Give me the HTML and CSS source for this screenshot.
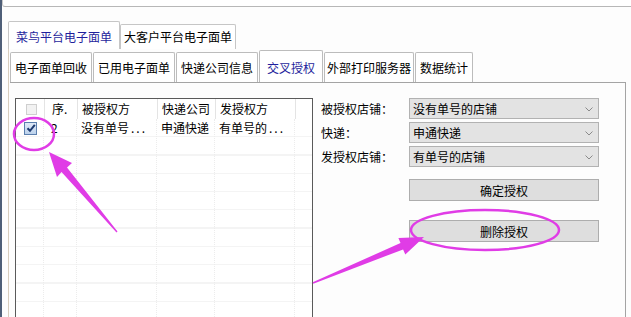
FILE: index.html
```html
<!DOCTYPE html>
<html lang="zh-CN">
<head>
  <meta charset="UTF-8">
  <title>交叉授权</title>
  <link rel="stylesheet" href="styles.css">
</head>
<body>
  <div class="window">
    <div class="top-panel"></div>

    <!-- Outer tabs -->
    <div class="outer">
      <div class="outer-tabs">
        <div class="outer-tab active">菜鸟平台电子面单</div>
        <div class="outer-tab">大客户平台电子面单</div>
      </div>

      <div class="outer-page">
        <!-- Inner tabs -->
        <div class="inner-tabs">
          <div class="inner-tab">电子面单回收</div>
          <div class="inner-tab">已用电子面单</div>
          <div class="inner-tab">快递公司信息</div>
          <div class="inner-tab active">交叉授权</div>
          <div class="inner-tab narrow">外部打印服务器</div>
          <div class="inner-tab">数据统计</div>
        </div>

        <div class="inner-page">
          <!-- Authorization list -->
          <div class="list">
            <div class="list-head">
              <div class="cell col-check"><span class="checkbox disabled"></span></div>
              <div class="cell col-seq sep">序.</div>
              <div class="cell col-name sep">被授权方</div>
              <div class="cell col-company sep">快递公司</div>
              <div class="cell col-issuer sep">发授权方</div>
              <div class="cell col-rest"></div>
            </div>
            <div class="list-body">
              <div class="grid-cols">
                <div class="col-check"></div>
                <div class="col-seq"></div>
                <div class="col-name"></div>
                <div class="col-company"></div>
                <div class="col-issuer"></div>
              </div>
              <div class="list-row">
                <div class="cell col-check">
                  <span class="checkbox checked">
                    <svg viewBox="0 0 10 10" width="10" height="10"><path d="M1.5 5.2 L4 7.8 L8.8 1.8" fill="none" stroke="#1d3a70" stroke-width="2"/></svg>
                  </span>
                </div>
                <div class="cell col-seq">2</div>
                <div class="cell col-name">没有单号<span class="dots">...</span></div>
                <div class="cell col-company">申通快递</div>
                <div class="cell col-issuer">有单号的<span class="dots">...</span></div>
              </div>
            </div>
          </div>

          <!-- Authorization form -->
          <div class="form">
            <label class="form-label">被授权店铺：</label>
            <div class="combo">没有单号的店铺<svg class="chevron" viewBox="0 0 8 5" width="8" height="5"><path d="M0.5 0.5 L4 4 L7.5 0.5" fill="none" stroke="#8a8a8a"/></svg></div>

            <label class="form-label">快递：</label>
            <div class="combo">申通快递<svg class="chevron" viewBox="0 0 8 5" width="8" height="5"><path d="M0.5 0.5 L4 4 L7.5 0.5" fill="none" stroke="#8a8a8a"/></svg></div>

            <label class="form-label">发授权店铺：</label>
            <div class="combo">有单号的店铺<svg class="chevron" viewBox="0 0 8 5" width="8" height="5"><path d="M0.5 0.5 L4 4 L7.5 0.5" fill="none" stroke="#8a8a8a"/></svg></div>

            <button class="btn btn-confirm">确定授权</button>
            <button class="btn btn-delete">删除授权</button>
          </div>
        </div>
      </div>
    </div>
  </div>

  <!-- Hand-drawn annotations on top of the screenshot -->
  <svg class="annotations" viewBox="0 0 631 317" width="631" height="317">
    <ellipse cx="34" cy="134" rx="20" ry="16" fill="none" stroke="#e03ce6" stroke-width="2.5"/>
    <polygon fill="#e03ce6" points="49,152 72,163 67,167.5 117.5,231.6 116.5,232.4 61.5,172 57,177"/>
    <ellipse cx="485" cy="230" rx="74" ry="20" fill="none" stroke="#e03ce6" stroke-width="2.5"/>
    <polygon fill="#e03ce6" points="424,237 405.3,254.5 403.1,249.4 313.3,283.7 312.7,282.3 400.5,243 398.4,237.9"/>
  </svg>
</body>
</html>
```

FILE: styles.css
```css
/* General */
body {
  margin: 0;
  width: 631px;
  height: 317px;
  overflow: hidden;
  position: relative;
  background-color: #ffffff;
  font-family: "Noto Sans CJK SC", "Liberation Sans", sans-serif;
  font-size: 12px;
  color: #000000;
}

.window {
  height: 317px;
  border-left: 2px solid #4f5f78; /* dark frame edge */
  box-sizing: border-box;
  background-color: #fdfdfd;
}

.top-panel {
  height: 6px;
  border-left: 1px solid #c9c9c9;
  border-bottom: 1px solid #b7b7b7;
  border-bottom-left-radius: 3px;
  background-color: #ffffff;
}

/* Outer tabs */
.outer {
  margin: 14px 0 0 6px;
}

.outer-tabs {
  display: flex;
  align-items: flex-end;
  height: 28px;
}

.outer-tab {
  height: 24px;
  line-height: 24px;
  padding: 0 3px;
  border: 1px solid #c6c6c6;
  border-bottom: none;
  border-radius: 2px 2px 0 0;
  background-color: #ffffff;
  white-space: nowrap;
}

.outer-tab.active {
  height: 27px;
  line-height: 29px;
  padding: 0 7px;
  color: #1f1f9c;
}

.outer-page {
  border-left: 1px solid #d8cebe;
  padding: 1px 0 0 1px;
}

/* Inner tabs */
.inner-tabs {
  display: flex;
  align-items: flex-end;
  height: 32px;
}

.inner-tab {
  height: 29px;
  line-height: 30px;
  padding: 0 4px;
  margin-right: 1px;
  border: 1px solid #bcbcbc;
  border-bottom: none;
  border-radius: 2px 2px 0 0;
  background-color: #ffffff;
  white-space: nowrap;
}

.inner-tab.narrow {
  padding: 0 2px;
}

.inner-tab.active {
  height: 31px;
  line-height: 34px;
  padding: 0 7px;
  color: #1f1f9c;
}

.inner-page {
  display: flex;
  width: 616px;
  height: 235px;
  box-sizing: border-box;
  border-top: 1px solid #a4a4a4;
  border-right: 1px solid #a4a4a4;
  padding: 15px 0 0 5px;
}

/* List view */
.list {
  width: 298px;
  box-sizing: border-box;
  border: 1px solid #5a5a5a;
  border-bottom: none;
  background-color: #ffffff;
  overflow: hidden;
}

.list-head,
.list-row {
  display: flex;
  height: 20px;
  line-height: 20px;
}

.list-row {
  height: 18px;
  line-height: 18px;
}

.list-head .sep {
  border-left: 1px solid #e4e4e4;
}

.cell {
  box-sizing: border-box;
  padding-left: 4px;
  white-space: nowrap;
}

.col-check { width: 28px; padding-left: 0; }
.col-seq { width: 33px; padding-left: 7px; }
.col-name { width: 80px; }
.col-company { width: 58px; }
.col-issuer { width: 80px; }
.col-rest { flex: 1; border-left: 1px solid #e4e4e4; }

.list-head .col-check {
  display: flex;
  align-items: center;
  padding-left: 10px;
}

.list-row .col-check {
  display: flex;
  align-items: center;
  padding-left: 8px;
}

.dots {
  letter-spacing: 2px;
  margin-left: 2px;
}

.list-body {
  position: relative;
  height: 200px;
  background-image: repeating-linear-gradient(to bottom, transparent 0, transparent 17px, #f4f4f4 17px, #f4f4f4 18.3px);
}

.grid-cols {
  position: absolute;
  top: 0;
  left: 0;
  bottom: 0;
  display: flex;
}

.grid-cols > div {
  border-right: 1px dotted #ececec;
  box-sizing: border-box;
}

/* Check boxes */
.checkbox {
  display: inline-flex;
  align-items: center;
  justify-content: center;
  width: 11px;
  height: 11px;
  box-sizing: border-box;
}

.checkbox.disabled {
  border: 1px solid #cfcfcf;
  background-color: #f2f2f2;
}

.checkbox.checked {
  width: 13px;
  height: 13px;
  border: 1px solid #5b7fae;
  background: linear-gradient(#dfeaf7, #bcd2ec);
}

/* Form */
.form {
  display: grid;
  grid-template-columns: 88px 190px;
  grid-auto-rows: 21px;
  row-gap: 3px;
  margin-left: 8px;
  align-content: start;
}

.form-label {
  line-height: 21px;
  white-space: nowrap;
}

.combo {
  position: relative;
  height: 21px;
  line-height: 19px;
  box-sizing: border-box;
  padding-left: 3px;
  border: 1px solid #b2b2b2;
  background-color: #e3e3e3;
}

.chevron {
  position: absolute;
  right: 5px;
  top: 8px;
}

.btn {
  grid-column: 2;
  height: 22px;
  padding: 0;
  font-family: inherit;
  font-size: 12px;
  color: #000000;
  border: 1px solid #adadad;
  background-color: #dedede;
}

.btn-confirm {
  margin-top: 9px;
}

.btn-delete {
  margin-top: 26px;
}

/* Annotation overlay */
.annotations {
  position: absolute;
  top: 0;
  left: 0;
  pointer-events: none;
}
```
